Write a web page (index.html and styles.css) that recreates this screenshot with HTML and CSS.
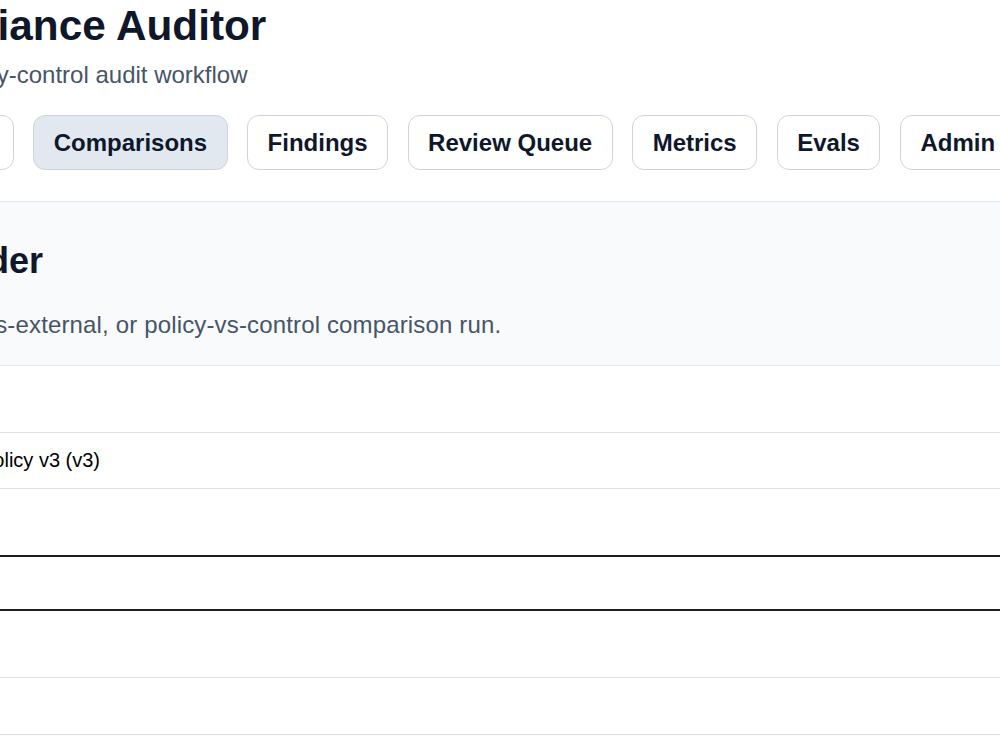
FILE: index.html
```html
<!DOCTYPE html>
<html lang="en">
<head>
  <meta charset="UTF-8" />
  <meta name="viewport" content="width=device-width, initial-scale=1.0"/>
  <title>Compliance Auditor</title>
  <link rel="stylesheet" href="styles.css">
</head>
<body>

  <div class="app">
    <header class="app-header">
      <h1>Compliance Auditor</h1>
      <p class="subtitle">Unified policy-control audit workflow</p>
    </header>

    <nav class="tabs">
      <a class="tab" href="#">Overview</a>
      <a class="tab active" href="#">Comparisons</a>
      <a class="tab" href="#">Findings</a>
      <a class="tab" href="#">Review Queue</a>
      <a class="tab" href="#">Metrics</a>
      <a class="tab" href="#">Evals</a>
      <a class="tab" href="#">Admin</a>
    </nav>

    <section class="card">
      <div class="card-head">
        <h2>Builder</h2>
        <p>Policy-vs-external, or policy-vs-control comparison run.</p>
      </div>

      <div class="rows">
        <div class="row row-tall">
          <span class="row-label">Type</span>
          <span class="row-value"></span>
        </div>
        <div class="row row-short">
          <span class="row-label">Left</span>
          <span class="row-value">Policy v3 (v3)</span>
        </div>
        <div class="row row-tall no-line">
          <span class="row-label">Right</span>
          <span class="row-value"></span>
        </div>
        <div class="row row-active">
          <span class="row-label">Scope</span>
          <span class="row-value"></span>
        </div>
        <div class="row row-tall">
          <span class="row-label">Owner</span>
          <span class="row-value"></span>
        </div>
        <div class="row row-short">
          <span class="row-label">Notes</span>
          <span class="row-value"></span>
        </div>
      </div>
    </section>
  </div>

</body>
</html>
```

FILE: styles.css
```css
html,
body {
  overflow: hidden;
}

body {
  margin: 0;
  background: #fff;
  font-family: "Liberation Sans", Arial, sans-serif;
  color: #0f172a;
}

/* page is wider than the window, left part runs off screen */
.app {
  width: 1400px;
  margin-left: -134px;
  padding-top: 2px;
}

.app-header h1 {
  margin: 0;
  font-size: 42.3px;
  line-height: 48px;
  font-weight: bold;
  color: #0f172a;
}

.subtitle {
  margin: 11px 0 0;
  font-size: 24px;
  line-height: 28px;
  color: #475569;
}

.tabs {
  display: flex;
  gap: 19.5px;
  margin-top: 26px;
}

.tab {
  padding: 12px 19.5px;
  border: 1px solid #cbd5e1;
  border-radius: 12px;
  background: #fff;
  color: #0f172a;
  text-decoration: none;
  font-size: 24px;
  line-height: 29px;
  font-weight: bold;
  white-space: nowrap;
}

.tab.active {
  background: #e2e8f0;
}

.card {
  margin-top: 31px;
  border-top: 1px solid #e2e8f0;
  border-left: 1px solid #e2e8f0;
}

.card-head {
  background: #f8fafc;
  padding: 37.5px 0 26px 52px;
  border-bottom: 1px solid #e2e8f0;
}

.card-head h2 {
  margin: 0;
  font-size: 36px;
  line-height: 42px;
  font-weight: bold;
}

.card-head p {
  margin: 29.5px 0 0 -9px;
  font-size: 24px;
  line-height: 28px;
  letter-spacing: 0.15px;
  color: #475569;
}

.row {
  display: grid;
  grid-template-columns: 100px 1fr;
  align-items: center;
  padding-left: 13px;
  border-bottom: 1px solid #dde3ea;
  font-size: 20px;
  color: #000;
}

.row-tall {
  height: 66px;
}

.row-short {
  height: 55px;
}

.row-short:last-child {
  height: 56px;
}

.row.no-line {
  border-bottom: none;
}

.row-active {
  height: 52px;
  border-top: 2px solid #1f1f1f;
  border-bottom: 2px solid #1f1f1f;
}

.row-label {
  color: #334155;
  font-weight: bold;
}
```
